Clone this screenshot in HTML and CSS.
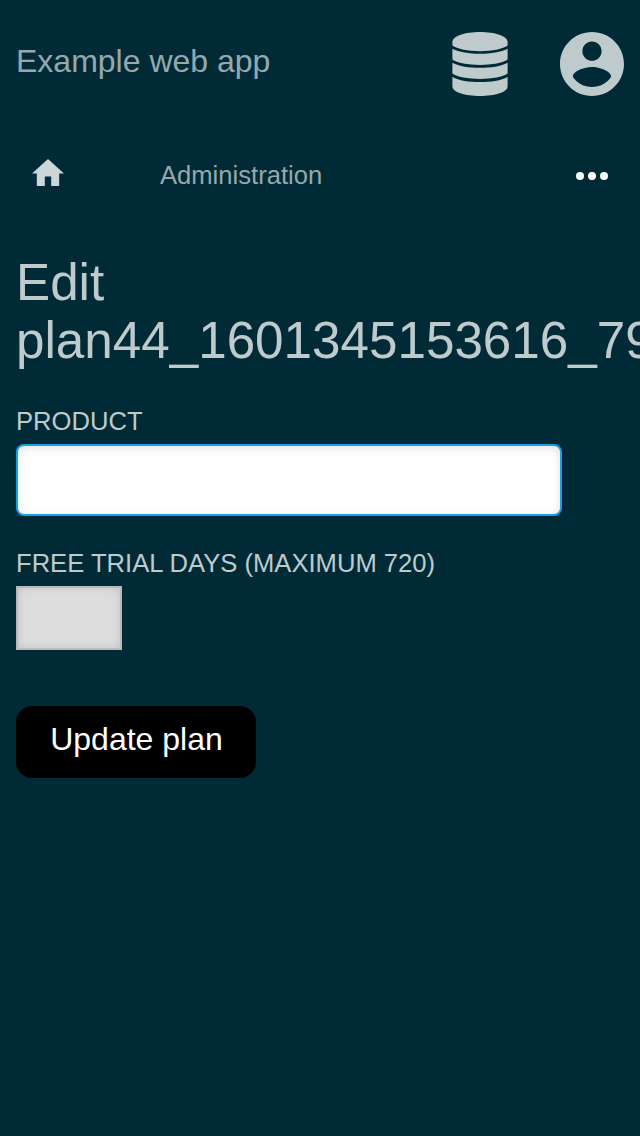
FILE: index.html
```html
<!DOCTYPE html>
<html lang="en">
<head>
<meta charset="utf-8">
<title>Edit plan</title>
<link rel="stylesheet" href="styles.css">
</head>
<body>
<header class="header">
  <div class="brand">Example web app</div>
  <div class="menus">
    <svg class="database" viewBox="0 0 56 64"><path d="M.4 10C.4 4 13 0 28 0s27.600 4 27.600 10v3.500C51 17 40 19.200 28 19.200S5 17 .4 13.500z"/><path d="M.4 16.800C7 20.300 17 21.800 28 21.800s21-1.500 27.600-5V27.600C51 31 40 33 28 33S5 31 .4 27.600z"/><path d="M.4 30.700C7 34.300 17 35.800 28 35.800s21-1.500 27.600-5.100V41.600C51 45 40 47 28 47S5 45 .4 41.600z"/><path d="M.4 44.900C7 48.500 17 50 28 50s21-1.500 27.600-5.100V54.500C55.600 60 43 64 28 64S.4 60 .4 54.500z"/></svg>
    <svg class="account" viewBox="2 2 20 20"><path d="M12 2C6.480 2 2 6.480 2 12s4.480 10 10 10 10-4.480 10-10S17.520 2 12 2zm0 3c1.660 0 3 1.340 3 3s-1.340 3-3 3-3-1.340-3-3 1.340-3 3-3zm0 14.200c-2.500 0-4.710-1.280-6-3.220.030-1.990 4-3.080 6-3.080 1.990 0 5.970 1.090 6 3.080-1.290 1.940-3.500 3.220-6 3.220z"/></svg>
  </div>
</header>
<nav class="navbar">
  <svg class="home" viewBox="2 3 20 17"><path d="M10 20v-6h4v6h5v-8h3L12 3 2 12h3v8z"/></svg>
  <span class="section">Administration</span>
  <svg class="more" viewBox="0 0 32 8"><circle cx="4" cy="4" r="4"/><circle cx="16" cy="4" r="4"/><circle cx="28" cy="4" r="4"/></svg>
</nav>
<main class="content">
  <h1 class="title">Edit plan44_1601345153616_79</h1>
  <form class="form">
    <label class="label" for="product">PRODUCT</label>
    <input class="field product" id="product" type="text">
    <label class="label" for="trial">FREE TRIAL DAYS (MAXIMUM 720)</label>
    <input class="field trial" id="trial" type="text">
    <button class="submit" type="button">Update plan</button>
  </form>
</main>
</body>
</html>
```
FILE: styles.css
```css
* { box-sizing: border-box; }
html { overflow: hidden; background: #002b36; }
body {
  margin: 0;
  min-height: 1136px;
  overflow: hidden;
  color: #bfcacd;
  font-family: "Liberation Sans", Arial, sans-serif;
}
svg { display: block; fill: currentColor; }
.header {
  display: flex;
  justify-content: space-between;
  height: 128px;
  padding: 32px 16px;
}
.brand { color: #96a8ad; font-size: 32px; line-height: 58px; }
.menus { display: flex; gap: 52px; }
.database { width: 56px; height: 64px; }
.account { width: 64px; height: 64px; }
.navbar {
  display: flex;
  align-items: center;
  height: 96px;
  padding: 0 32px;
}
.home { width: 32px; height: 27.2px; margin-bottom: 7px; color: #ccd5d7; }
.section {
  flex: 1;
  margin: 0 0 2px 96px;
  color: #96a8ad;
  font-size: 25.6px;
  line-height: 30px;
}
.more { width: 32px; height: 8px; color: #fff; }
.content { padding: 30px 16px 0; }
.title {
  margin: 0;
  font-size: 51.2px;
  font-weight: 400;
  line-height: 58px;
}
.form { display: flex; flex-direction: column; align-items: flex-start; padding-top: 36px; }
.label { font-size: 25.6px; line-height: 30px; }
.field {
  margin: 0;
  padding: 0 16px;
  border: 2px solid #b8b8b8;
  outline: none;
  font: 32px "Liberation Sans", Arial, sans-serif;
}
.product {
  width: 546px;
  height: 72px;
  margin: 8px 0 32px;
  border-color: #139fea;
  border-radius: 8px;
  background: #fff;
  box-shadow: inset 0 2px 8px rgba(0, 0, 0, 0.12);
}
.trial {
  width: 106px;
  height: 64px;
  margin: 8px 0 56px;
  background: #ddd;
  box-shadow: inset 0 0 8px rgba(0, 0, 0, 0.12);
}
.submit {
  width: 240px;
  height: 72px;
  margin: 0;
  padding: 0 0 5px 1px;
  border: 0;
  border-radius: 16px;
  background: #000;
  color: #fff;
  font: 32px "Liberation Sans", Arial, sans-serif;
}
```
